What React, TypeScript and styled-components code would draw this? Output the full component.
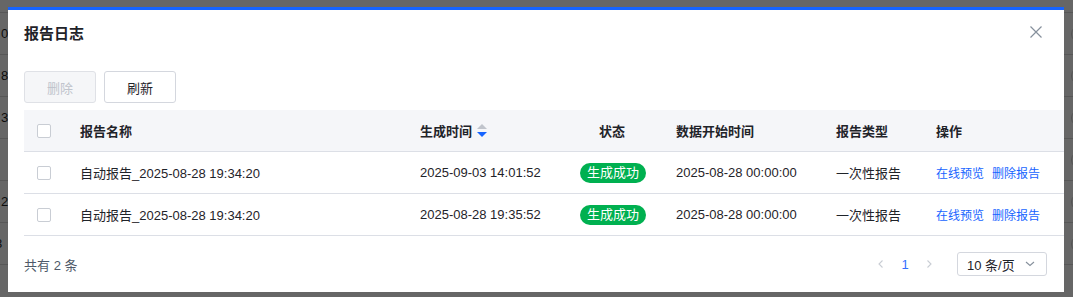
import styled, { createGlobalStyle } from "styled-components";

interface ReportLog {
  id: number;
  name: string;
  createdAt: string;
  status: string;
  dataStart: string;
  type: string;
}

const logs: ReportLog[] = [
  {
    id: 1,
    name: "自动报告_2025-08-28 19:34:20",
    createdAt: "2025-09-03 14:01:52",
    status: "生成成功",
    dataStart: "2025-08-28 00:00:00",
    type: "一次性报告",
  },
  {
    id: 2,
    name: "自动报告_2025-08-28 19:34:20",
    createdAt: "2025-08-28 19:35:52",
    status: "生成成功",
    dataStart: "2025-08-28 00:00:00",
    type: "一次性报告",
  },
];

// page rows peeking out behind the mask
const backRows = ["", "0", "8", "3", "", "2", "3"];

const GlobalStyle = createGlobalStyle`
  html, body {
    margin: 0;
    padding: 0;
  }
  body {
    width: 1073px;
    height: 297px;
    overflow: hidden;
    background: #fff;
    font-family: "Liberation Sans", "Noto Sans CJK SC", sans-serif;
    color: #1f2329;
  }
`;

// Background page
const Page = styled.div`
  margin-top: -29px;
`;

const PageRow = styled.div`
  height: 41px;
  border-bottom: 1px solid #dadada;
  display: flex;
  align-items: center;
  justify-content: space-between;
  font-size: 13px;
  color: #1f1f1f;
`;

const PageCell = styled.span<{ $shift: number }>`
  margin-left: ${(p) => p.$shift}px;
`;

const PageRadio = styled.span`
  width: 18px;
  height: 18px;
  box-sizing: border-box;
  border-radius: 50%;
  border: 1.5px solid #cfcfcf;
  margin-right: -16px;
`;

// Modal
const Mask = styled.div`
  position: fixed;
  inset: 0;
  background: rgba(0, 0, 0, 0.6);
  padding: 7px 9px 0 8px;
`;

const Dialog = styled.div`
  width: 1056px;
  height: 285px;
  box-sizing: border-box;
  background: #fff;
  border-top: 3px solid #1664ff;
  display: flex;
  flex-direction: column;
  overflow: hidden;
`;

const Header = styled.div`
  height: 44px;
  padding: 0 22px 0 16px;
  display: flex;
  align-items: center;
  justify-content: space-between;
`;

const Title = styled.h2`
  margin: 0;
  font-size: 15px;
  font-weight: 700;
  color: #1f2329;
`;

const CloseButton = styled.button`
  border: none;
  background: none;
  padding: 0;
  width: 12px;
  height: 12px;
  display: flex;
  cursor: pointer;
`;

const Body = styled.div`
  padding: 17px 0 0 16px;
`;

const Toolbar = styled.div`
  display: flex;
  gap: 8px;
  margin-bottom: 7px;
`;

const Button = styled.button`
  width: 72px;
  height: 32px;
  border-radius: 3px;
  border: 1px solid #d4d7de;
  background: #fff;
  color: #1f2329;
  font-family: inherit;
  font-size: 13px;
  cursor: pointer;

  &:disabled {
    background: #f5f6f8;
    color: #c0c4cc;
    border-color: #dfe1e6;
    cursor: not-allowed;
  }
`;

const Table = styled.table`
  width: 1040px;
  border-collapse: collapse;
  table-layout: fixed;
  font-size: 13px;
`;

const Th = styled.th<{ $center?: boolean }>`
  height: 41px;
  padding: 0 16px;
  background: #f5f6f9;
  border-bottom: 1px solid #dcdfe6;
  text-align: ${(p) => (p.$center ? "center" : "left")};
  font-weight: 700;
  color: #1f2329;
  white-space: nowrap;
`;

const Td = styled.td<{ $center?: boolean }>`
  height: 41px;
  padding: 0 16px;
  border-bottom: 1px solid #dcdfe6;
  text-align: ${(p) => (p.$center ? "center" : "left")};
  color: #1f2329;
  white-space: nowrap;
`;

const CheckCell = styled.td`
  padding: 0;
  text-align: center;
  border-bottom: 1px solid #dcdfe6;
`;

const CheckHeadCell = styled(CheckCell).attrs({ as: "th" })`
  height: 41px;
  background: #f5f6f9;
`;

const Checkbox = styled.span`
  display: inline-block;
  vertical-align: middle;
  width: 14px;
  height: 14px;
  box-sizing: border-box;
  border: 1px solid #c9cdd4;
  border-radius: 2px;
  background: #fff;
`;

const SortLabel = styled.span`
  display: inline-flex;
  align-items: center;
  gap: 5px;
`;

const SortIcon = styled.span`
  display: inline-flex;
  flex-direction: column;
  gap: 3px;
`;

const Triangle = styled.span<{ $down?: boolean; $active?: boolean }>`
  width: 0;
  height: 0;
  border-left: 5px solid transparent;
  border-right: 5px solid transparent;
  ${(p) =>
    p.$down
      ? `border-top: 5px solid ${p.$active ? "#1664ff" : "#c0c4cc"};`
      : `border-bottom: 5px solid ${p.$active ? "#1664ff" : "#c0c4cc"};`}
`;

const StatusTag = styled.span`
  display: inline-block;
  height: 20px;
  line-height: 20px;
  padding: 0 7px;
  border-radius: 10px;
  background: #00b050;
  color: #fff;
  font-size: 13px;
`;

const Actions = styled.div`
  display: flex;
  gap: 8px;
`;

const LinkButton = styled.a`
  color: #1664ff;
  font-size: 12px;
  cursor: pointer;
  text-decoration: none;
`;

const Footer = styled.div`
  display: flex;
  align-items: center;
  justify-content: space-between;
  padding: 16px 17px 0 16px;
`;

const Total = styled.span`
  font-size: 13px;
  color: #4e5969;
`;

const Pager = styled.div`
  display: flex;
  align-items: center;
`;

const PageItem = styled.span<{ $active?: boolean; $disabled?: boolean }>`
  width: 24px;
  height: 24px;
  display: flex;
  align-items: center;
  justify-content: center;
  font-size: 13px;
  color: ${(p) => (p.$active ? "#3370ff" : p.$disabled ? "#c9cdd4" : "#4e5969")};
`;

const SizeSelect = styled.div`
  margin-left: 16px;
  width: 90px;
  height: 24px;
  box-sizing: border-box;
  border: 1px solid #d4d7de;
  border-radius: 3px;
  display: flex;
  align-items: center;
  justify-content: space-between;
  padding: 0 11px 0 9px;
  font-size: 13px;
  color: #1f2329;
`;

const Chevron = ({ dir }: { dir: "left" | "right" | "down" }) => {
  const d =
    dir === "left" ? "M6.5 1.5 3 5l3.5 3.5" : dir === "right" ? "M3.5 1.5 7 5 3.5 8.5" : "M1 3l4 3.5L9 3";
  return (
    <svg width="10" height="10" viewBox="0 0 10 10" fill="none">
      <path d={d} stroke="currentColor" strokeWidth="1.1" />
    </svg>
  );
};

const DownArrow = styled.span`
  display: flex;
  color: #86909c;
`;

export default function App() {
  return (
    <>
      <GlobalStyle />
      <Page>
        {backRows.map((t, i) => (
          <PageRow key={i}>
            <PageCell $shift={i === 6 ? -5 : 1}>{t}</PageCell>
            <PageRadio />
          </PageRow>
        ))}
      </Page>

      <Mask>
        <Dialog>
          <Header>
            <Title>报告日志</Title>
            <CloseButton aria-label="关闭">
              <svg width="12" height="12" viewBox="0 0 12 12">
                <path d="M0.5 0.5l11 11M11.5 0.5l-11 11" stroke="#86909c" strokeWidth="1.2" />
              </svg>
            </CloseButton>
          </Header>

          <Body>
            <Toolbar>
              <Button disabled>删除</Button>
              <Button>刷新</Button>
            </Toolbar>

            <Table>
              <colgroup>
                <col style={{ width: 40 }} />
                <col style={{ width: 340 }} />
                <col style={{ width: 160 }} />
                <col style={{ width: 96 }} />
                <col style={{ width: 160 }} />
                <col style={{ width: 100 }} />
                <col />
              </colgroup>
              <thead>
                <tr>
                  <CheckHeadCell>
                    <Checkbox />
                  </CheckHeadCell>
                  <Th>报告名称</Th>
                  <Th>
                    <SortLabel>
                      生成时间
                      <SortIcon>
                        <Triangle />
                        <Triangle $down $active />
                      </SortIcon>
                    </SortLabel>
                  </Th>
                  <Th $center>状态</Th>
                  <Th>数据开始时间</Th>
                  <Th>报告类型</Th>
                  <Th>操作</Th>
                </tr>
              </thead>
              <tbody>
                {logs.map((log) => (
                  <tr key={log.id}>
                    <CheckCell>
                      <Checkbox />
                    </CheckCell>
                    <Td>{log.name}</Td>
                    <Td>{log.createdAt}</Td>
                    <Td $center>
                      <StatusTag>{log.status}</StatusTag>
                    </Td>
                    <Td>{log.dataStart}</Td>
                    <Td>{log.type}</Td>
                    <Td>
                      <Actions>
                        <LinkButton>在线预览</LinkButton>
                        <LinkButton>删除报告</LinkButton>
                      </Actions>
                    </Td>
                  </tr>
                ))}
              </tbody>
            </Table>
          </Body>

          <Footer>
            <Total>共有 {logs.length} 条</Total>
            <Pager>
              <PageItem $disabled>
                <Chevron dir="left" />
              </PageItem>
              <PageItem $active>1</PageItem>
              <PageItem $disabled>
                <Chevron dir="right" />
              </PageItem>
              <SizeSelect>
                10 条/页
                <DownArrow>
                  <Chevron dir="down" />
                </DownArrow>
              </SizeSelect>
            </Pager>
          </Footer>
        </Dialog>
      </Mask>
    </>
  );
}
